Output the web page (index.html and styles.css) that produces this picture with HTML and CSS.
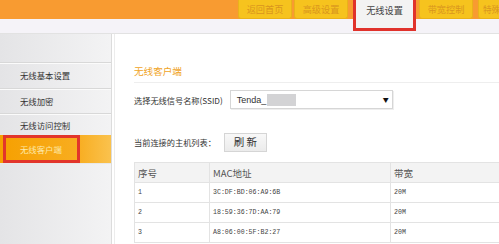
FILE: index.html
```html
<!DOCTYPE html>
<html lang="zh">
<head>
<meta charset="utf-8">
<title>无线客户端</title>
<link rel="stylesheet" href="styles.css">
</head>
<body>
<div class="page">
  <div class="topbar">
    <div class="tab">返回首页</div>
    <div class="tab">高级设置</div>
    <div class="tab active">无线设置</div>
    <div class="tab">带宽控制</div>
    <div class="tab cut">特殊</div>
  </div>
  <div class="strip"></div>
  <div class="main">
    <div class="sidebar">
      <div class="item i1">无线基本设置</div>
      <div class="item i2">无线加密</div>
      <div class="item i3">无线访问控制</div>
      <div class="item current"><span class="mark">无线客户端</span></div>
    </div>
    <div class="content">
      <div class="title">无线客户端</div>
      <div class="row ssid">
        <span class="label">选择无线信号名称(SSID)</span>
        <div class="select"><span class="val">Tenda_</span><span class="blur"></span><span class="arrow">▼</span></div>
      </div>
      <div class="row host">
        <span class="label">当前连接的主机列表：</span>
        <button class="btn">刷 新</button>
      </div>
      <table class="list">
        <thead>
          <tr><th class="c1">序号</th><th class="c2">MAC地址</th><th class="c3">带宽</th></tr>
        </thead>
        <tbody>
          <tr><td>1</td><td>3C:DF:BD:06:A9:6B</td><td>20M</td></tr>
          <tr><td>2</td><td>18:59:36:7D:AA:79</td><td>20M</td></tr>
          <tr><td>3</td><td>A8:06:00:5F:B2:27</td><td>20M</td></tr>
        </tbody>
      </table>
    </div>
  </div>
</div>
</body>
</html>
```
FILE: styles.css
```css
html, body {
  margin: 0;
  padding: 0;
  background: #ffffff;
  overflow: hidden;
}
body {
  font-family: "Noto Sans CJK SC", "Noto Sans", sans-serif;
  color: #333;
}
.page {
  width: 499px;
  height: 244px;
  overflow: hidden;
}
.topbar {
  height: 19px;
  background: #f89b31;
  display: flex;
  align-items: flex-start;
  padding-left: 238px;
  gap: 2px;
}
.tab {
  flex: none;
  width: 54px;
  height: 19px;
  box-sizing: border-box;
  background: #f6c31e;
  border: 1px solid #eab21a;
  border-top: none;
  border-radius: 0 0 3px 3px;
  color: #d9951e;
  font-size: 9.2px;
  line-height: 18px;
  text-align: center;
}
.tab.active {
  position: relative;
  z-index: 2;
  width: 63px;
  height: 31px;
  margin-left: 3px;
  margin-right: 1px;
  background: #f3f3f3;
  border: 3px solid #e0322b;
  border-top: none;
  border-radius: 0;
  color: #444;
  line-height: 20px;
}
.tab.cut {
  width: 26px;
  margin-left: 3px;
  text-align: left;
  padding-left: 4px;
  font-size: 8.6px;
  white-space: nowrap;
  overflow: hidden;
}
.strip {
  height: 14px;
  background: #f5f3f8;
  border-bottom: 1px solid #e2e2e2;
}
.main {
  display: flex;
  height: 210px;
}
.sidebar {
  width: 112px;
  flex: none;
  background: linear-gradient(to right, #e4e4e6, #f3f3f4);
  border-right: 1px solid #dcdcdc;
  padding-top: 28px;
  box-sizing: border-box;
}
.item {
  font-size: 8.4px;
  color: #333;
  padding-left: 20px;
  border-top: 1px solid #d8d8d8;
  box-shadow: inset 0 1px 0 #fbfbfb;
  height: 24px;
  line-height: 24px;
}
.item.i1 { height: 25px; line-height: 25px; }
.item.i3 { height: 21px; line-height: 22px; }
.item.current {
  height: 28px;
  padding-left: 3px;
  border-top: none;
  box-shadow: none;
  background: linear-gradient(to right, #f6a000, #f8ad20 70%, #fac24e);
  border-bottom: 1px solid #e8e8e8;
}
.mark {
  display: block;
  width: 77px;
  height: 28px;
  box-sizing: border-box;
  border: 3px solid #e2352b;
  padding-left: 14px;
  line-height: 22px;
  color: #fde9a8;
  font-size: 8.4px;
}
.content {
  flex: 1;
  margin-left: 2px;
  border-left: 1px solid #ececec;
  padding: 28px 10px 0 19px;
  background: #fff;
}
.title {
  color: #f0a326;
  font-size: 9.6px;
  line-height: 18px;
  padding-bottom: 2px;
  border-bottom: 1px solid #eeeeee;
}
.row {
  display: flex;
  align-items: center;
}
.label {
  font-size: 8.2px;
  color: #333;
}
.ssid {
  margin-top: 7px;
  height: 19px;
}
.select {
  margin-left: 7px;
  width: 163px;
  height: 19px;
  box-sizing: border-box;
  border: 1px solid #d6d6d6;
  box-shadow: 1px 1px 0 #eeeeee;
  display: flex;
  align-items: center;
  padding-left: 6px;
  background: #fff;
}
.val {
  font-family: "Liberation Sans", Arial, sans-serif;
  font-size: 9px;
  color: #333;
}
.blur {
  width: 29px;
  height: 12px;
  background: #d3d3d5;
  margin-left: 1px;
}
.arrow {
  margin-left: auto;
  margin-right: 3px;
  font-size: 6px;
  color: #111;
}
.host {
  margin-top: 24px;
  height: 18px;
}
.btn {
  margin-left: 8px;
  width: 43px;
  height: 19px;
  padding: 0;
  border: 1px solid #d5d5d5;
  background: linear-gradient(#f8f8f8, #ebebeb);
  font-family: "Noto Sans CJK SC", sans-serif;
  font-size: 10.5px;
  color: #333;
  line-height: 16px;
}
.list {
  margin-top: 11px;
  width: 354px;
  border-collapse: collapse;
  table-layout: fixed;
}
.list th, .list td {
  border: 1px solid #e3e3e3;
  text-align: left;
  padding: 0 0 0 3px;
  height: 19px;
}
.list th {
  background: #f3f3f3;
  font-weight: normal;
  font-size: 9.5px;
  color: #555;
}
.list td {
  font-family: "Liberation Mono", monospace;
  font-size: 6.6px;
  color: #444;
}
.c1 { width: 71px; }
.c2 { width: 177px; }
.c3 { width: 106px; }
```
